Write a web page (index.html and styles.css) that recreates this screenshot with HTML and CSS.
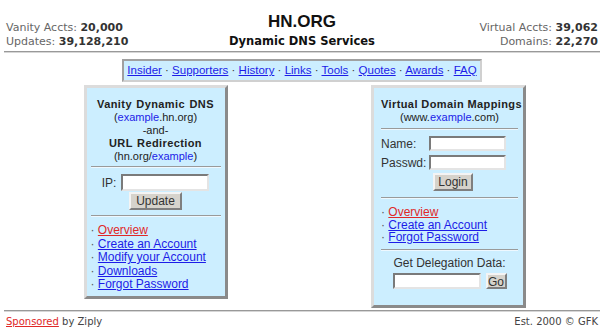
FILE: index.html
```html
<!DOCTYPE html>
<html lang="en">
<head>
  <meta charset="UTF-8" />
  <title>HN.ORG - Dynamic DNS Services</title>
  <link rel="stylesheet" href="styles.css">
</head>
<body>
  <div class="top">
    <div class="stats">
      Vanity Accts: <b>20,000</b><br>
      Updates: <b>39,128,210</b>
    </div>
    <div class="brand">
      <div class="logo">HN.ORG</div>
      <div class="tagline">Dynamic DNS Services</div>
    </div>
    <div class="stats stats-right">
      Virtual Accts: <b>39,062</b><br>
      Domains: <b>22,270</b>
    </div>
  </div>

  <div class="rule"></div>

  <div class="menu">
    <a href="#">Insider</a> · <a href="#">Supporters</a> · <a href="#">History</a> · <a href="#">Links</a> · <a href="#">Tools</a> · <a href="#">Quotes</a> · <a href="#">Awards</a> · <a href="#">FAQ</a>
  </div>

  <div class="panels">
    <div class="panel panel-left">
      <div class="title">Vanity Dynamic DNS</div>
      <div class="sub">(<span class="ex">example</span>.hn.org)</div>
      <div class="sub">-and-</div>
      <div class="title">URL Redirection</div>
      <div class="sub">(hn.org/<span class="ex">example</span>)</div>
      <div class="sep sep-a"></div>
      <div class="ip-row">
        <label for="ip">IP:</label>
        <input type="text" id="ip" class="field field-ip">
      </div>
      <div class="btn-row"><button class="btn btn-update">Update</button></div>
      <div class="sep sep-b"></div>
      <ul class="links links-left">
        <li>· <a href="#" class="hot">Overview</a></li>
        <li>· <a href="#">Create an Account</a></li>
        <li>· <a href="#">Modify your Account</a></li>
        <li>· <a href="#">Downloads</a></li>
        <li>· <a href="#">Forgot Password</a></li>
      </ul>
    </div>

    <div class="panel panel-right">
      <div class="title">Virtual Domain Mappings</div>
      <div class="sub">(www.<span class="ex">example</span>.com)</div>
      <div class="sep sep-c"></div>
      <div class="login">
        <label for="name">Name:</label>
        <input type="text" id="name" class="field field-login">
        <label for="passwd">Passwd:</label>
        <input type="password" id="passwd" class="field field-login">
        <button class="btn btn-login">Login</button>
      </div>
      <div class="sep sep-d"></div>
      <ul class="links links-right">
        <li>· <a href="#" class="hot">Overview</a></li>
        <li>· <a href="#">Create an Account</a></li>
        <li>· <a href="#">Forgot Password</a></li>
      </ul>
      <div class="sep sep-e"></div>
      <div class="deleg-label">Get Delegation Data:</div>
      <div class="deleg-row">
        <input type="text" class="field field-deleg">
        <button class="btn btn-go">Go</button>
      </div>
    </div>
  </div>

  <div class="rule rule-foot"></div>

  <div class="foot">
    <span><a href="#" class="hot">Sponsored</a> by Ziply</span>
    <span>Est. 2000 © GFK</span>
  </div>
</body>
</html>
```

FILE: styles.css
```css
body {
  margin: 0;
  padding: 0 4px;
  background: #fff;
  color: #222;
  font-family: "Liberation Sans", Arial, sans-serif;
}

a {
  color: #1c1ce8;
}

a.hot {
  color: #e02828;
}

/* header */
.top {
  display: grid;
  grid-template-columns: 1fr auto 1fr;
  padding-top: 10px;
}

.stats {
  margin-top: 11px;
  padding: 0 2px;
  font-family: "DejaVu Sans", Verdana, sans-serif;
  font-size: 11px;
  line-height: 13.5px;
  color: #666;
}

.stats b {
  color: #333;
}

.stats-right {
  text-align: right;
}

.brand {
  text-align: center;
  color: #111;
}

.logo {
  font-family: "Liberation Sans", Arial, sans-serif;
  font-weight: bold;
  font-size: 17px;
  line-height: 23px;
}

.tagline {
  font-family: "DejaVu Sans", Verdana, sans-serif;
  font-weight: bold;
  font-size: 11.5px;
  line-height: 16px;
}

.rule {
  margin-top: 2px;
  border-top: 1px solid #999;
  border-bottom: 1px solid #d6d6d6;
}

/* nav */
.menu {
  width: fit-content;
  margin: 6px auto 0;
  padding: 2px 3px;
  background: #cceeff;
  border: 2px solid;
  border-color: #a0a0a0 #d0d0d0 #d0d0d0 #a0a0a0;
  font-size: 11.5px;
  line-height: 15px;
  color: #333;
}

/* panels */
.panels {
  display: grid;
  grid-template-columns: 1fr 1fr;
  align-items: start;
  justify-items: center;
  padding: 0 5px;
  margin-top: 3px;
}

.panel {
  box-sizing: border-box;
  background: #cceeff;
  border: 3px solid;
  border-color: #dcdcdc #8a8a8a #8a8a8a #dcdcdc;
  text-align: center;
  font-size: 12px;
  color: #222;
}

.panel-left {
  width: 144px;
  padding: 10px 4px 4px;
}

.panel-right {
  width: 155px;
  padding: 10px 5px 16px 7px;
}

.title {
  font-weight: bold;
  font-size: 11px;
  letter-spacing: 0.4px;
  line-height: 13px;
  white-space: nowrap;
}

.panel-left .title {
  word-spacing: 1px;
}

.sub {
  font-size: 11px;
  line-height: 13px;
}

.ex {
  color: #1c1ce8;
}

.sep {
  border-top: 1px solid #9a9a9a;
  border-bottom: 1px solid #eef8ff;
}

.sep-a { margin: 3px 0 6px; }
.sep-b { margin: 5px 0 7px; }
.sep-c { margin: 4px 0 6px; }
.sep-d { margin: 6px 0 7px; }
.sep-e { margin: 5px 0 6px; }

.field {
  box-sizing: border-box;
  margin: 0;
  padding: 0 2px;
  background: #fff;
  border: 2px solid;
  border-color: #7a7a7a #e4e4e4 #e4e4e4 #7a7a7a;
  font-size: 11px;
}

.btn {
  box-sizing: border-box;
  margin: 0;
  padding: 0;
  background: #d6d3cc;
  border: 2px solid;
  border-color: #f4f4f4 #7f7f7f #7f7f7f #f4f4f4;
  font-family: "Liberation Sans", Arial, sans-serif;
  font-size: 12px;
  color: #333;
}

.ip-row {
  display: flex;
  justify-content: center;
  align-items: center;
  gap: 5px;
  color: #333;
}

.field-ip {
  width: 88px;
  height: 17px;
}

.btn-row {
  margin-top: 1px;
}

.btn-update {
  width: 53px;
  height: 18px;
}

.links {
  list-style: none;
  margin: 0;
  padding: 0;
  text-align: left;
  color: #555;
}

.links-left li {
  line-height: 13.5px;
}

.links-right li {
  line-height: 12.5px;
}

/* login form */
.login {
  display: grid;
  grid-template-columns: 46px 77px;
  column-gap: 2px;
  row-gap: 4px;
  align-items: center;
  text-align: left;
  color: #333;
}

.field-login {
  width: 77px;
  height: 15px;
}

.btn-login {
  grid-column: 2;
  justify-self: start;
  margin: -1px 0 0 4px;
  width: 40px;
  height: 18px;
}

.deleg-label {
  line-height: 13px;
  color: #333;
}

.deleg-row {
  display: flex;
  justify-content: center;
  align-items: center;
  gap: 5px;
  margin-top: 3px;
}

.field-deleg {
  width: 88px;
  height: 16px;
}

.btn-go {
  width: 21px;
  height: 16px;
}

/* footer */
.rule-foot {
  margin-top: 2px;
}

.foot {
  display: flex;
  justify-content: space-between;
  margin-top: 3px;
  padding: 0 2px;
  font-family: "DejaVu Sans", Verdana, sans-serif;
  font-size: 10px;
  line-height: 14px;
  color: #444;
}
```
